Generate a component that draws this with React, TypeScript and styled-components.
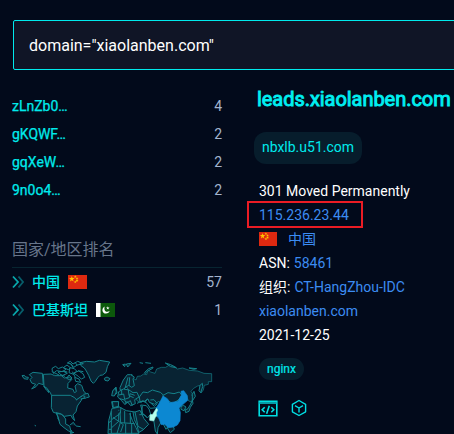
import React from "react";
import styled, { createGlobalStyle } from "styled-components";

const GlobalStyle = createGlobalStyle`
  * { box-sizing: border-box; }
  html, body { margin: 0; background: #020a1b; overflow: hidden; }
  body { font-family: Roboto, "Noto Sans CJK SC", sans-serif; font-size: 14px; }
`;

const Page = styled.main`
  width: 454px;
  height: 434px;
  overflow: hidden;
  padding-top: 20px;
  background: #020a1b;
`;

const SearchBar = styled.div`
  width: 460px;
  height: 50px;
  margin-left: 13px;
  padding: 0 15px;
  display: flex;
  align-items: center;
  border: 1px solid #00eaec;
  border-radius: 2px;
  background: #101526;
  color: #fff;
  font-size: 16px;
`;

const Columns = styled.div`
  display: flex;
  align-items: flex-start;
`;

const Sidebar = styled.aside`
  width: 210px;
  margin-left: 12px;
  padding-top: 22px;
  flex: none;
`;

const RankRow = styled.div`
  height: 28px;
  display: flex;
  align-items: center;
  color: #00eaec;
`;

const CertificateName = styled.span`
  -webkit-text-stroke: 0.25px currentColor;
`;

const Count = styled.span`
  margin-left: auto;
  color: #a3b4cf;
`;

const CountryName = styled.span`
  margin: 0 8px;
  line-height: 20px;
  font-weight: 500;
`;

const SectionTitle = styled.h2`
  height: 46px;
  margin: 18px 0 0;
  padding-top: 16px;
  line-height: 24px;
  border-bottom: 1px solid #072531;
  color: #67758a;
  font-size: 16px;
  font-weight: 400;
`;

const Result = styled.section`
  margin-left: 37px;
  flex: none;
  color: #fff;
`;

const Host = styled.h1`
  margin: 14px 0 0 -2px;
  line-height: 30px;
  font-size: 20px;
  font-weight: 400;
  letter-spacing: -0.05px;
  color: #00eff1;
  -webkit-text-stroke: 0.9px #00eff1;
`;

const Tag = styled.span<{ $small?: boolean }>`
  display: flex;
  align-items: center;
  justify-content: center;
  width: ${(p) => (p.$small ? 45 : 108)}px;
  height: ${(p) => (p.$small ? 22 : 32)}px;
  border-radius: ${(p) => (p.$small ? 11 : 12)}px;
  padding-bottom: ${(p) => (p.$small ? 0 : 2)}px;
  background: #071d2c;
  color: #00eaec;
  font-size: ${(p) => (p.$small ? 12 : 14)}px;
  -webkit-text-stroke: ${(p) => (p.$small ? 0.2 : 0)}px currentColor;
`;

const HostTag = styled.div`
  margin: 18px 0 15px -5px;
`;

const Details = styled.div`
  display: flex;
  flex-direction: column;
`;

const Line = styled.div`
  height: 24px;
  line-height: 24px;
  display: flex;
  align-items: center;
  gap: 4px;
  font-size: 14px;
  white-space: nowrap;
`;

const Label = styled.span`
  height: 24px;
`;

const Value = styled.span<{ $afterFlag?: boolean }>`
  color: #3c8cf2;
  height: 24px;
  margin-left: ${(p) => (p.$afterFlag ? 7 : 0)}px;
`;

const Highlighted = styled(Line)`
  width: 116px;
  height: 27px;
  margin: -2px 0 -1px -12px;
  padding-left: 10px;
  border: 2px solid #eb1c24;
`;

const Service = styled.div`
  margin-top: 11px;
`;

const Actions = styled.div`
  display: flex;
  align-items: center;
  gap: 13px;
  margin-top: 19px;
  margin-left: -1px;
`;

const Drawing = styled.svg`
  display: block;
  flex: none;
`;

const MapArea = styled.div`
  margin-top: 16px;
`;

const Arrows = () => (
  <Drawing width="12" height="14" viewBox="0 0 12 14" fill="none" strokeWidth="1.8">
    <path d="M1 1.5 6 7 1 12.5" stroke="#08a8ad" />
    <path d="M6.5 1.5 11 7 6.5 12.5" stroke="#075d6a" />
  </Drawing>
);

const star = "M0-3 .7-1H3L1.2.3 1.8 2.5 0 1.2-1.8 2.5-1.2.3-3-1H-.7Z";

const ChinaFlag = ({ width = 19 }: { width?: number }) => (
  <Drawing width={width} height="14" viewBox="0 0 19 14" preserveAspectRatio="none">
    <path fill="#de2910" d="M0 0h19v14H0z" />
    <g fill="#ffc400">
      <path d={star} transform="translate(3.8 4)" />
      <path d={star} transform="translate(7.3 1.7) scale(.5)" />
      <path d={star} transform="translate(9 3.4) scale(.5)" />
      <path d={star} transform="translate(9 5.6) scale(.5)" />
      <path d={star} transform="translate(7.3 7) scale(.5)" />
    </g>
  </Drawing>
);

const PakistanFlag = () => (
  <Drawing width="19" height="14" viewBox="0 0 19 14">
    <path fill="#0c590b" d="M0 0h19v14H0z" />
    <path fill="#fff" d="M0 0h4.5v14H0zM8.8 3.4C5.2 5 5.8 10.6 10 10.6c2 0 3.2-1 3.6-2.8-1.2 1.3-3.4 1.4-4.4.1-1-1.3-1-3.2-.4-4.5Z" />
    <path fill="#fff" d={star} transform="translate(11.8 5.1) scale(.6)" />
  </Drawing>
);

const WorldMap = () => (
  <Drawing width="210" height="94" viewBox="36 0 630 282">
    <g fill="#082333" stroke="#15818a" strokeWidth="3" strokeLinejoin="round">
      <path d="M66 107l7-1 4 5 8 1-2 6-11-2zM88 104l11-7 28 3 3 34-14-4-8 10-13 7 12-14-12-4-5-10 6-7zM130 103l23-1 11 5 20 0 9 7 15-3 8 7-12 12-1 14 16 4 4 10 6-3-4-17 8-7 12 5 6 17 12 13-4 8-17 3-7 5-7 4-5-8-12-5-54-1-6-14-11-13-8-6z" />
      <path d="M155 166h56l13 7 6 7 9-7 8-6-3 14-12 17-4 17-9 10 5 17-7-8-4-8-20 3-8-6-14-3-11-3-6-14zM168 218l14 3 8 7 7 9 0 15 12 6 3 12 6 8-12-5-14-10-12-10-6-22zM170 220l7 21-4-6M210 255l10-8 7 10M228 258l14 2M214 270l-3 11 11-4" />
      <path d="M240 68l20-4 24 2 14-5 31 5-7 14-4 17-10 8-8 1-6 6-9 13-5 5-7-7-7-17-7-13-6-9-10-7zM313 115l8-4 9 5-6 7-9-2z" />
      <path fill="none" d="M157 84l10-5 8 7 12-5 11 7-11 7-17-3-9 7-5-9zM174 96l16-2 12 6-16 7zM190 83l11-8 10 8-6 6zM202 69l9-5 8 8 14-8 17 7-18 4-11 7-8-10zM210 83l13 3 7 7-9 10-14-5zM221 99l15-6 13 8 5 11-10 5-9-8zM224 112l13 5 5 10-15-3zM207 105l9 9-6 6-10-5zM225 67l7 9M234 92l16 3M188 93l14 3M165 99l12 6M182 104l13 5M156 94l8 9M212 70l9 16M217 95l9 17" />
      <path d="M131 138l11 8 5 12-8-8zM228 180l12-8 8-5 7 2-4 6-9 2M250 163l14-3 4 11-8 2M104 256l4 2" />
      <path d="M340 151l8-10 3 18-8 6-5-7zM335 185h20v17h-17zM336 205l20-6 5 82h-37l2-39z" />
      <path fill="none" d="M333 234l9 3 1 21 14 11M325 249l15-11 4-22M326 268h12l3 12" />
    </g>
    <g transform="translate(330 0)" fill="#082333" stroke="#15818a" strokeWidth="3" strokeLinejoin="round">
      <path strokeWidth="2" d="M65 102l5 13 8 5 4-11 10-1 9-6 9 2 4-15 8 7 13 4 5-13 14-5 13 0 11-7 13 4 11 8 16-3 20 7 25 2 19 7 23 1v24l-10 0 0 8-12 3-3 14-7 9-2-23-8 2-12 7-8 9 7 12-4 20-10-3-8-15-17 10-15-9-18 7-14 6-14-11-16 2-14-8-14 8-12 15-12-5-10-16-15-8-5-16-11-3 10-11z" />
      <path d="M30 143l10-23 12-16 10 0 11 7-4 6 4 20-8 5-9-6-11 7-6 9-9-3zM45 145l9-33M57 138l2-26M103 98l13-12 13-5-1 4-16 9-8 8M38 74l8-2-2 8zM49 72l14-2-10 11zM89 68l10 2M106 68l17 2M166 69l16 5 17 9-17-3zM237 84l14 4 9-2-20-2z" />
      <path d="M26 155l14-8 17 3 12 8 12-1 6 14-13 8 2 12-14 6-11-13-6 10-11-13-11-10z" />
      <path fill="none" d="M26 165l15-3 3 16 14-5 2-12 14 5M35 150v15M55 149l2 18 14 6M29 176l15 4 5 10 12-8 6 15" />
      <path d="M8 153l8-9 3 12-6 12-8-1zM7 185h19l-1 14-15 4z" />
      <path d="M10 205l18-4 21 11 26 4 15-5 12 25 14 17-17 17-14 8-7-15-11-22-8-21M4 211v69h83l-6-24-8-17-4-23" />
      <path fill="none" d="M5 239l26-19 2-18M5 263l21-19 0-24M30 216l2 32 42 3M31 248l-10 32M44 213v37M61 218v32M47 251v31M65 250v32M9 232l31 22-8 22M75 216l9 43 18 10M88 224l14 0M92 195l17 2 8 10 5 16-10 11-14-14z" />
      <path d="M88 171l11-15 14 2 14-8 24 7 11 10-10 20-7-2-11 8-16-6-4-10-11 7-13 1z" />
      <path fill="none" d="M81 190l18-8 12 8 10 15 20-2M97 198l-2 21 15 11M105 188l7-12M121 180l11-1 9 11M121 188l12 11 9-8" />
      <path d="M158 167l16-9 18 3 16-5 8 10-11 14-16 10-18-8zM131 239l10-24 17 16-4 14-10 18-2 19-6-9zM157 237l14 4 4 18-7 9-9-17zM174 248l12 1 7 19-12 10-9-14z" />
      <path d="M213 200l7-4 8 5-6 11-9-4zM225 210l9-4 8-14 5-11 2 9-8 12-4 12-10 4zM245 166l7-12 4 15-9 14 0-19M270 136l7-6 1 10-6 18-5-6z" />
      <path fill="#0c88d2" stroke="#0c88d2" strokeWidth="2" d="M139 203l12-19 8-16 13 8 8 12 24-4 10-18-1-12 8-2 11 15 1 14-14 12-12 11 4 13-1 25-8 13-12 6-15 2-11-10-10 1-8-20-14-12z" />
      <path fill="#baffed" stroke="#8eece0" strokeWidth="2" d="M140 205l-6 8-6 10-8 1-1 17 12 2 5-11 4-5-1-8 4-9z" />
    </g>
  </Drawing>
);

const CodeIcon = () => (
  <Drawing width="20" height="17" viewBox="0 0 20 17" fill="none" stroke="#00dfe3" strokeWidth="1.6">
    <path d="M1.2 1.2h17.6v14.6H1.2z" />
    <path d="M1.5 3h17" stroke="#069ba6" strokeWidth="2" />
    <path d="m6.7 7.2-2.5 2.5 2.5 2.5M11.3 5.8l-2.7 8M13.3 7.2l2.5 2.5-2.5 2.5" />
  </Drawing>
);

const CubeIcon = () => (
  <Drawing width="16" height="18" viewBox="0 0 16 18" fill="none" stroke="#00dfe3" strokeWidth="1.4" strokeLinejoin="round">
    <path d="m8 1.5 6.6 3.8v7.5L8 16.5l-6.6-3.7V5.3zM4 6.7 8 9l4-2.3M8 9v4.5" />
  </Drawing>
);

const certificates = [
  { name: "zLnZb0…", count: 4 },
  { name: "gKQWF…", count: 2 },
  { name: "gqXeW…", count: 2 },
  { name: "9n0o4…", count: 2 },
];

export default function App() {
  return (
    <Page>
      <GlobalStyle />
      <SearchBar>domain="xiaolanben.com"</SearchBar>
      <Columns>
        <Sidebar>
          {certificates.map((item) => (
            <RankRow key={item.name}>
              <CertificateName>{item.name}</CertificateName>
              <Count>{item.count}</Count>
            </RankRow>
          ))}
          <SectionTitle>国家/地区排名</SectionTitle>
          <RankRow>
            <Arrows />
            <CountryName>中国</CountryName>
            <ChinaFlag />
            <Count>57</Count>
          </RankRow>
          <RankRow>
            <Arrows />
            <CountryName>巴基斯坦</CountryName>
            <PakistanFlag />
            <Count>1</Count>
          </RankRow>
          <MapArea>
            <WorldMap />
          </MapArea>
        </Sidebar>
        <Result>
          <Host>leads.xiaolanben.com</Host>
          <HostTag>
            <Tag>nbxlb.u51.com</Tag>
          </HostTag>
          <Details>
            <Line>301 Moved Permanently</Line>
            <Highlighted>
              <Value>115.236.23.44</Value>
            </Highlighted>
            <Line>
              <ChinaFlag width={18} />
              <Value $afterFlag>中国</Value>
            </Line>
            <Line>
              <Label>ASN:</Label>
              <Value>58461</Value>
            </Line>
            <Line>
              <Label>组织:</Label>
              <Value>CT-HangZhou-IDC</Value>
            </Line>
            <Line>
              <Value>xiaolanben.com</Value>
            </Line>
            <Line>2021-12-25</Line>
          </Details>
          <Service>
            <Tag $small>nginx</Tag>
          </Service>
          <Actions>
            <CodeIcon />
            <CubeIcon />
          </Actions>
        </Result>
      </Columns>
    </Page>
  );
}
